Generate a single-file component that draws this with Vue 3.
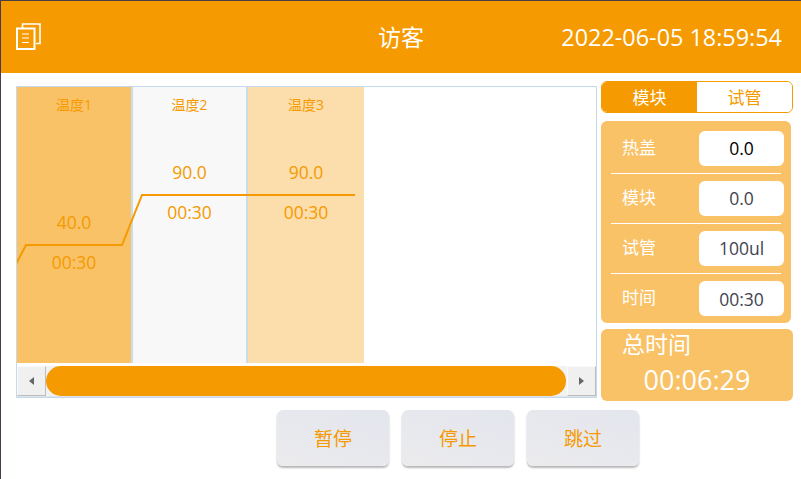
<script setup>
const columns = [
  { name: '温度1', temp: '40.0', time: '00:30', tone: 'tone-a', low: true },
  { name: '温度2', temp: '90.0', time: '00:30', tone: 'tone-b', low: false },
  { name: '温度3', temp: '90.0', time: '00:30', tone: 'tone-c', low: false },
]
const rows = [
  { label: '热盖', value: '0.0', strong: true },
  { label: '模块', value: '0.0' },
  { label: '试管', value: '100ul' },
  { label: '时间', value: '00:30' },
]
const actions = ['暂停', '停止', '跳过']
</script>

<template>
  <div class="page">
    <header class="header">
      <svg class="doc" width="26" height="28" viewBox="0 0 26 28" fill="none" stroke="#fff">
        <path d="M6.5 5V1H24V20.5H20" stroke-width="1.6" />
        <rect x="1" y="5.5" width="17.5" height="20.5" stroke-width="2" />
        <path d="M6 11H13M6 15H13M6 19.5H13" stroke-width="1.2" />
      </svg>
      <div class="title">访客</div>
      <div class="clock">2022-06-05 18:59:54</div>
    </header>
    <main class="main">
      <section class="chart">
        <div class="plot">
          <div v-for="c in columns" :key="c.name" class="col" :class="c.tone">
            <div class="col-name">{{ c.name }}</div>
            <div class="col-vals" :class="{ low: c.low }">
              <div class="val">{{ c.temp }}</div>
              <div class="val second">{{ c.time }}</div>
            </div>
          </div>
          <svg class="line" width="350" height="100" viewBox="0 0 350 100" fill="none">
            <path d="M-1 79L9 60H105L125 10H338" stroke="#f59a00" stroke-width="2" />
          </svg>
        </div>
        <div class="scroll">
          <div class="arrow"><i class="tri left"></i></div>
          <div class="track"><div class="thumb"></div></div>
          <div class="arrow"><i class="tri right"></i></div>
        </div>
      </section>
      <aside class="side">
        <div class="tabs">
          <div class="tab on">模块</div>
          <div class="tab">试管</div>
        </div>
        <div class="params">
          <div v-for="r in rows" :key="r.label" class="param">
            <span class="p-label">{{ r.label }}</span>
            <span class="p-value" :class="{ strong: r.strong }">{{ r.value }}</span>
          </div>
        </div>
        <div class="total">
          <div class="t-label">总时间</div>
          <div class="t-value">00:06:29</div>
        </div>
      </aside>
    </main>
    <footer class="actions">
      <button v-for="a in actions" :key="a" class="action">{{ a }}</button>
    </footer>
  </div>
</template>

<style>
html, body { margin: 0; background: #fff; }
</style>

<style scoped>
.page {
  width: 800px;
  height: 478px;
  border-left: 1px solid #4a3a4c;
  border-top: 1px solid #4a4040;
  background: #fff;
  font-family: "Open Sans", "Noto Sans CJK SC", sans-serif;
  overflow: hidden;
}
.header {
  height: 72px;
  background: #f59a00;
  color: #fff;
  display: flex;
  align-items: center;
  position: relative;
  padding-left: 15px;
}
.doc { margin-top: -1px; }
.title {
  position: absolute;
  left: 377px;
  top: 20px;
  font-size: 23px;
  line-height: 32px;
}
.clock {
  margin-left: auto;
  margin-right: 19px;
  font-size: 23.4px;
  line-height: 30px;
  margin-top: -1px;
}
.main {
  display: flex;
  padding: 8px 8px 0 15px;
  gap: 4px;
}
.chart {
  width: 579px;
  height: 310px;
  margin-top: 5px;
  border: 1px solid #c5d8ec;
  display: flex;
  flex-direction: column;
}
.plot {
  height: 277px;
  display: flex;
  position: relative;
  overflow: hidden;
}
.col {
  width: 114px;
  border-right: 2px solid #c9dcea;
  color: #f59a00;
  text-align: center;
  display: flex;
  flex-direction: column;
}
.tone-a { background: #f9c267; }
.tone-b { background: #f8f8f8; width: 113px; }
.tone-c { background: #fbdeab; border-right: 0; width: 116px; }
.col-name { font-size: 14px; line-height: 18px; margin-top: 9px; }
.col-vals { margin-top: 46px; }
.col-vals.low { margin-top: 96px; }
.val { font-size: 17.5px; line-height: 24px; }
.second { margin-top: 16px; }
.line { position: absolute; left: 0; top: 98px; }
.scroll {
  display: flex;
  background: #f2f2f2;
  border-bottom: 1px solid #dfe3ea;
  height: 30px;
  margin-top: 3px;
}
.arrow {
  width: 27px;
  height: 28px;
  border: 1px solid;
  border-color: #fafafa #bdbdbd #bdbdbd #fafafa;
  background: #f0f0f0;
  display: flex;
  align-items: center;
  justify-content: center;
}
.tri { width: 0; height: 0; border: 4px solid transparent; }
.tri.left { border-right: 5px solid #666; border-left: 0; }
.tri.right { border-left: 5px solid #666; border-right: 0; }
.track { flex: 1; padding: 0 1px 0 0; }
.thumb {
  height: 30px;
  width: 520px;
  background: #f59a00;
  border-radius: 15px;
}
.side { width: 192px; display: flex; flex-direction: column; }
.tabs {
  height: 30px;
  border: 1px solid #f59a00;
  border-radius: 6px;
  display: flex;
  overflow: hidden;
  color: #f59a00;
  font-size: 17px;
}
.tab { flex: 1; display: flex; align-items: center; justify-content: center; background: #fff; padding-bottom: 2px; }
.tab.on { background: #f59a00; color: #fff; flex: 0 0 95px; }
.params {
  width: 190px;
  height: 202px;
  margin-top: 8px;
  background: #f9c267;
  border-radius: 6px;
  box-sizing: border-box;
  padding: 3px 10px 0;
}
.param {
  height: 50px;
  box-sizing: border-box;
  display: flex;
  align-items: center;
  justify-content: space-between;
  border-bottom: 1px solid #fff;
  color: #fff;
  font-size: 17.5px;
}
.param:last-child { border-bottom: 0; }
.p-label { margin-left: 11px; font-size: 17px; line-height: 22px; margin-top: -2px; }
.p-value {
  width: 85px;
  height: 35px;
  margin-top: -1px;
  margin-right: -3px;
  background: #fff;
  border-radius: 6px;
  color: #3f4450;
  display: flex;
  align-items: center;
  justify-content: center;
}
.p-value.strong { color: #000; }
.total {
  width: 192px;
  height: 72px;
  margin-top: 6px;
  background: #f9c267;
  border-radius: 6px;
  color: #fff;
}
.t-label { font-size: 23px; line-height: 31px; padding: 0 0 0 21px; }
.t-value { font-size: 27px; line-height: 36px; text-align: center; margin-top: 2px; }
.actions {
  display: flex;
  gap: 13px;
  padding: 9px 0 0 276px;
}
.action {
  width: 112px;
  height: 56px;
  border: 0;
  border-radius: 6px;
  background: linear-gradient(200deg, #e4e6ee, #ebebed);
  box-shadow: 0 2px 2px #b8b8b8;
  color: #f59a00;
  font: inherit;
  font-size: 19px;
  padding: 0;
}
</style>
